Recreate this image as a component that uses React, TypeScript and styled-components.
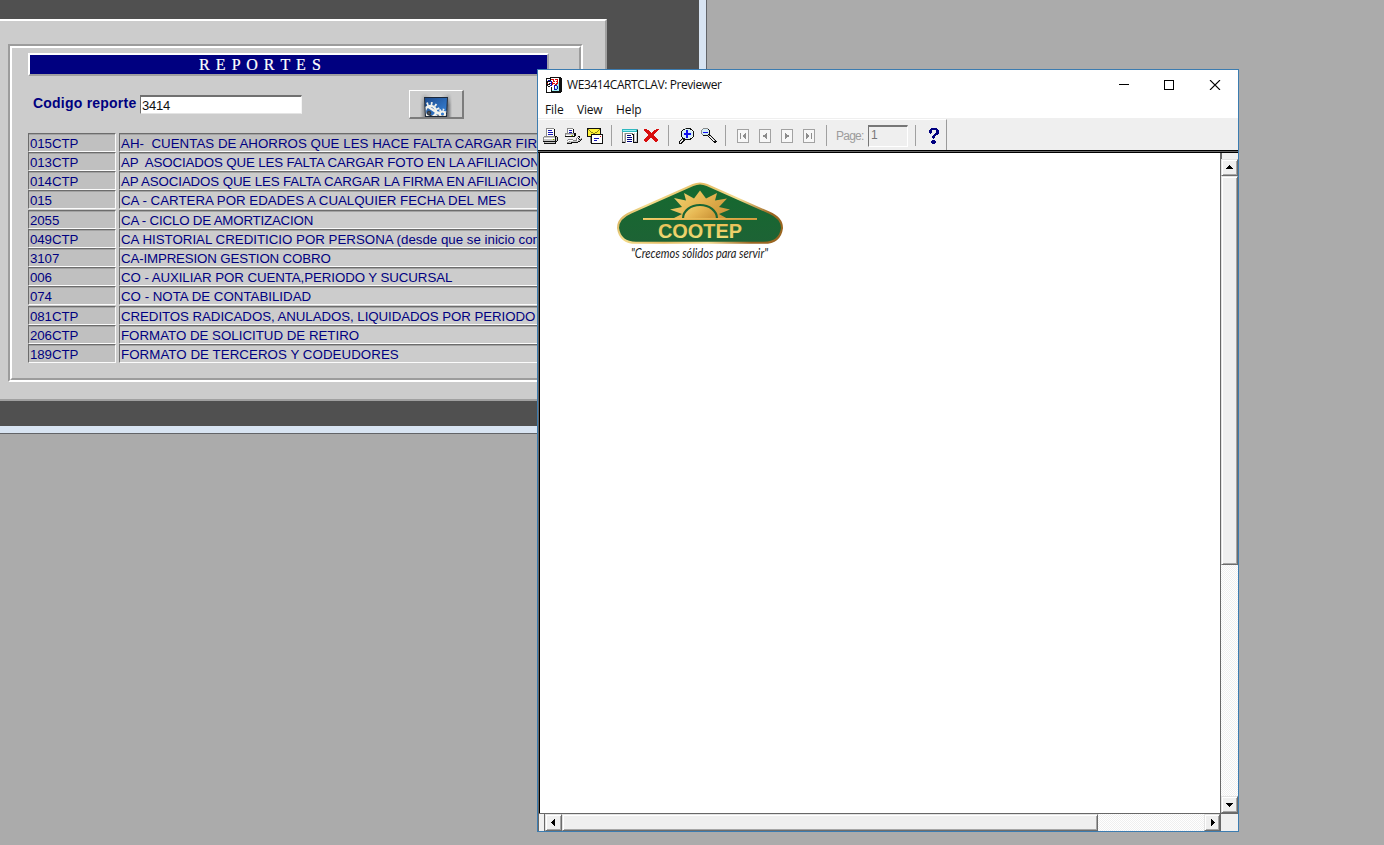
import React from "react";
import styled, { createGlobalStyle } from "styled-components";

const GlobalStyle = createGlobalStyle`
  * { box-sizing: border-box; }
  body { margin: 0; background: #ababab; overflow: hidden; }
`;

const Desktop = styled.main`
  position: relative;
  width: 1384px;
  height: 845px;
  overflow: hidden;
  background: #ababab;
  font-family: "Liberation Sans", sans-serif;
`;

/* ---------- form window ---------- */

const FormWindow = styled.section`
  position: absolute;
  left: 0;
  top: 0;
  width: 707px;
  height: 434px;
  background: #d8e4f2;
  border: solid #626468;
  border-width: 0 1px 1px 0;
`;

const FormCanvas = styled.div`
  width: 699px;
  height: 426px;
  padding-top: 19px;
  background: #505050;
`;

const FormPanel = styled.div`
  width: 607px;
  height: 382px;
  padding: 23px 0 0 8px;
  background: #cccccc;
  border-top: 2px solid #fff;
  border-right: 2px solid #a0a0a0;
  border-bottom: 2px solid #a0a0a0;
`;

const GroupOuter = styled.div`
  width: 575px;
  height: 338px;
  border: 2px solid;
  border-color: #9c9c9c #fff #fff #9c9c9c;
`;

const GroupInner = styled.div`
  height: 100%;
  padding: 5px 0 0 16px;
  border: 2px solid;
  border-color: #fff #9c9c9c #9c9c9c #fff;
`;

const Banner = styled.h1`
  margin: 0;
  width: 521px;
  height: 23px;
  padding-left: 169px;
  background: #000080;
  border: 2px solid;
  border-color: #fff #a0a0a8 #a0a0a0 #fff;
  color: #fff;
  font: 400 16px/20px "Liberation Serif", serif;
  letter-spacing: 1.07px;
  -webkit-text-stroke: 0.2px #fff;
  white-space: pre;
`;

const CodeLine = styled.div`
  display: flex;
  height: 57px;
  padding: 14px 0 0 5px;
`;

const CodeLabel = styled.label`
  width: 107px;
  padding-top: 5px;
  color: #000080;
  font: 700 14px/17px "Liberation Sans", sans-serif;
  letter-spacing: 0.22px;
  white-space: nowrap;
`;

const CodeInput = styled.div`
  width: 162px;
  height: 19px;
  margin-top: 5px;
  padding-left: 1px;
  background: #fff;
  border: solid;
  border-width: 2px 1px 1px 1px;
  border-color: #707070 #f4f4f4 #e4e4e4 #707070;
  color: #101010;
  font-size: 13px;
  line-height: 17px;
  letter-spacing: -0.2px;
`;

const RunButton = styled.button`
  display: flex;
  justify-content: center;
  align-items: flex-end;
  width: 55px;
  height: 29px;
  margin: 0 0 0 107px;
  padding: 0;
  background: #cccccc;
  border: solid;
  border-width: 1px 2px 2px 1px;
  border-color: #fff #7c7c7c #7c7c7c #fff;
`;

const Rows = styled.div`
  display: flex;
  flex-direction: column;
`;

const Row = styled.div<{ $gap: boolean }>`
  display: flex;
  gap: 3px;
  margin-top: ${(p) => (p.$gap ? 1 : 0)}px;
`;

const Cell = styled.div<{ $width: number; $shade: boolean; $spacing?: number }>`
  width: ${(p) => p.$width}px;
  height: 19px;
  padding-left: 1px;
  overflow: hidden;
  background: ${(p) => (p.$shade ? "#c0c0c0" : "#cccccc")};
  border: 1px solid;
  border-color: #6c6c6c #fbfbfb #fbfbfb #6c6c6c;
  box-shadow: inset 0 1px 0 #a2a2a2;
  color: #000080;
  font-size: 13.3px;
  line-height: 19px;
  letter-spacing: ${(p) => p.$spacing ?? -0.1}px;
  white-space: pre;
`;

/* ---------- previewer window ---------- */

const Previewer = styled.section`
  position: absolute;
  left: 537px;
  top: 69px;
  display: flex;
  flex-direction: column;
  width: 702px;
  height: 763px;
  background: #fff;
  border: 1px solid #3c7cb0;
`;

const TitleBar = styled.header`
  display: flex;
  height: 30px;
  padding-left: 8px;
  align-items: center;
  color: #111;
  font: 12px/16px "Open Sans", sans-serif;
`;

const TitleText = styled.span`
  flex: 1;
  padding-left: 5px;
  letter-spacing: -0.41px;
`;

const Caption = styled.div`
  display: flex;
  gap: 35px;
  padding-right: 17px;
`;

const MenuBar = styled.nav`
  display: flex;
  height: 18px;
  padding-left: 7px;
  align-items: center;
  color: #111;
  font: 12px/16px "Open Sans", sans-serif;
`;

const MenuItem = styled.span<{ $width: number; $spacing: number }>`
  width: ${(p) => p.$width}px;
  padding-top: 2px;
  letter-spacing: ${(p) => p.$spacing}px;
`;

const ToolBar = styled.div`
  display: flex;
  height: 32px;
  background: #efefef;
`;

const Band = styled.div`
  display: flex;
  width: 409px;
  height: 31px;
  margin-top: 1px;
  padding: 1px 0 0 5px;
  align-items: center;
  border-top: 1px solid #fff;
  border-right: 1px solid #9a9a9a;
`;

const Tool = styled.span<{ $slot: number }>`
  display: flex;
  width: ${(p) => p.$slot}px;
  flex: none;
`;

const Separator = styled.i<{ $slot: number }>`
  width: ${(p) => p.$slot}px;
  height: 21px;
  flex: none;
  border-left: 1px solid #a0a0a0;
`;

const PageLabel = styled.span`
  width: 32px;
  color: #9c9c9c;
  font-size: 12px;
  letter-spacing: -0.75px;
`;

const PageInput = styled.span`
  width: 40px;
  height: 22px;
  margin-right: 7px;
  padding-left: 2px;
  border: solid;
  border-width: 2px 1px 1px 1px;
  border-color: #777 #fff #fff #777;
  color: #777;
  font-size: 12px;
  line-height: 16px;
`;

const Divider = styled.div`
  height: 3px;
  background: #686868;
  border: solid #000;
  border-width: 1px 0;
`;

const View = styled.div`
  display: grid;
  grid-template-columns: 682px 18px;
  grid-template-rows: 660px 18px;
`;

const Paper = styled.div`
  padding: 28px 0 0 78px;
  background: #fff;
  border-left: 1px solid #686868;
  box-shadow: inset 1px 0 0 #000;
`;

const track = `repeating-conic-gradient(#ffffff 0 25%, #efefef 0 50%) 0 0 / 2px 2px`;

const VScroll = styled.div`
  display: flex;
  flex-direction: column;
  background: ${track};
  border-left: 1px solid #686868;
`;

const HScroll = styled.div`
  display: flex;
  background: ${track};
  border-top: 1px solid #686868;
`;

const SplitBox = styled.div<{ $w: number; $h: number }>`
  width: ${(p) => p.$w}px;
  height: ${(p) => p.$h}px;
  flex: none;
  background: #f0f0f0;
  border-left: 1px solid #686868;
`;

const SideBox = styled(SplitBox)`
  border-right: 1px solid #686868;
`;

const ScrollPiece = styled.div<{ $w: number; $h: number }>`
  display: flex;
  align-items: center;
  justify-content: center;
  width: ${(p) => p.$w}px;
  height: ${(p) => p.$h}px;
  flex: none;
  background: #efefef;
  border: 1px solid;
  border-color: #e3e3e3 #6c6c6c #6c6c6c #e3e3e3;
  box-shadow: inset 1px 1px 0 #fff, inset -1px -1px 0 #a6a6a6;
`;

const Spacer = styled.div`
  flex: 1;
`;

const Corner = styled.div`
  background: #f0f0f0;
  border: solid #686868;
  border-width: 1px 0 0 1px;
`;

/* ---------- drawings ---------- */

const palette: Record<string, string> = {
  K: "#101010",
  W: "#ffffff",
  G: "#8a8a8a",
  L: "#c8c8c8",
  B: "#1414b4",
  b: "#1010f0",
  Y: "#fff23a",
  y: "#8c8618",
  g: "#4c9a30",
  R: "#d80c0c",
  T: "#30b8c0",
  C: "#9cf0f4",
  c: "#d4ecf6",
  N: "#000080",
};

function Pixels({ rows }: { rows: string[] }) {
  const w = Math.max(...rows.map((r) => r.length));
  return (
    <svg width={w} height={rows.length} viewBox={`0 0 ${w} ${rows.length}`} shapeRendering="crispEdges">
      {rows.flatMap((r, y) =>
        [...r].map((c, x) =>
          palette[c] ? <rect key={`${x}-${y}`} x={x} y={y} width="1" height="1" fill={palette[c]} /> : null,
        ),
      )}
    </svg>
  );
}

const appIcon = [
  "....KKKKKKKKKKK.",
  "KKKKKWWWWWWWWKKK",
  "KWWWKRRRWRRRWKKK",
  "KWBBKWWRWWWRWKKK",
  "KKKKBBWRRWRRWKKK",
  "KKWWWBRWWWWRCKKK",
  "KRWKBBRRRWRRCKKK",
  "KKKKWBRWWRRCCKKK",
  "KKWWBBWWBBBCCKKK",
  "KWKKWWWWBWCBCKKK",
  "KWWWWKWWBWCBCKKK",
  "KWWWWKWWBCCBCKKK",
  "KWWWWKWWBBBCCKKK",
  "KWWWWKCCCCCCCKKK",
  "KWWWWKKKKKKKKKKK",
  "KKKKKKKKKKKKKKK.",
];

const printerIcon = [
  "...GGGGGGGG.....",
  "...GWWWWWWWK....",
  "...GWBBBBWWK....",
  "...GWWWWWWWK....",
  "...GWBBBBBWK....",
  "...GWWWWWWWK....",
  "...GWBBBBBWK....",
  "...GWWWWWWWK....",
  ".GGGGGGGGGGGKK..",
  "GLLLLLLLLLLLKLK.",
  "GWWWWWWWWWWWKLK.",
  "GLLLLLLLLYgLKLK.",
  "GLLLLLLLLLLLKLK.",
  "KKKKKKKKKKKKKK..",
  ".GLLLLLLLLLLK...",
  ".KKKKKKKKKKKK...",
];

const setupIcon = [
  "..GGGGGG.........",
  "..GWWWWWK........",
  "..GWBBBWK........",
  "..GWWWWWK........",
  "..GWBBBWK........",
  "GGGGGGGGGKK......",
  "GLLLLLLLLKK......",
  "GWWWWWYgWKK......",
  "KKKKKKKKKK...KK..",
  "............GWK..",
  "...........GWK..G",
  "...GGGGG...GWLKGK",
  "..GWWWWWGGGGWLLK.",
  "....GLLLLLLLLKK..",
  "..GGLLKKKKKKK....",
  "..KKKKK..........",
];

const mailIcon = [
  "KKKKKKKKKKKKKK..",
  "KyYYYYYYYYYYyK..",
  "KYyYYYYYYYYyYK..",
  "KYYyYYYYYYyYYK..",
  "KYYYyyYYyyYYYK..",
  "KYYYYYyyYYYYYK..",
  "KYYYKKKKKKKKKKKK",
  "KYYYKWWWWWWWWWWK",
  "KKKKKWWWWWWWWRWK",
  "...GKWWWWWWWWWWK",
  "...GKWWBBBBBWWWK",
  "...GKWWWWWWWWWWK",
  "...GKWWBBBWWWWWK",
  "...GKWWWWWWWWWWK",
  "...GKWWWWWWWWWWK",
  "....KKKKKKKKKKKK",
];

const reportIcon = [
  "TTTTTTTTTTTTTTTG",
  "TCCCCCCCCCCCCCTK",
  "TTTTTTTTTTTTTTTK",
  "GWWWWWWWWWWWWWWK",
  "GWLGGGGGGGGWLWLK",
  "GWLGWWWWWWKKLWLK",
  "GWLGWNNNNWWKLWLK",
  "GWLGWWWWWWWKLWLK",
  "GWLGWNNNNNWKLWLK",
  "GWLGWWWWWWWKLWLK",
  "GWLGWNNNNNWKLWLK",
  "GWLGWWWWWWWKLWLK",
  "GLLGWNNNNNWKLLLK",
  "KKKGWWWWWWWKKKKK",
];

const closeIcon = [
  "RRR.........RRR",
  "RRRRR.....RRRR.",
  ".RRRRR...RRRR..",
  "..RRRRR.RRRR...",
  "...RRRRRRRR....",
  "....RRRRRR.....",
  "....RRRRRR.....",
  "...RRRRRRRR....",
  "..RRRRRRRRRR...",
  ".RRRRR..RRRRR..",
  "RRRRR....RRRRR.",
  "RRRR......RRRR.",
  ".RR........RR..",
];

const zoomInIcon = [
  "......GKKKKK....",
  "....KKcccccKK...",
  "...KcccbbcccWK..",
  "..KccccbbccccWK.",
  "..KccccbbcccccK.",
  "..KccbbbbbbbccK.",
  "..KccbbbbbbbccK.",
  "..KccccbbcccccK.",
  "..KccccbbccccWK.",
  "...KcccbbcccWK..",
  "...KKKcccccKK...",
  "..KLKKKKKKKK....",
  ".KLWKK..........",
  "KLWKK...........",
  "KWKK............",
  "KKK.............",
];

const zoomOutIcon = [
  "..GGGGG.........",
  ".GcccccK........",
  "GcccccccK.......",
  "GcccccccK.......",
  "GcbbbbbcK.......",
  "GcccccccK.......",
  ".GcccccKK.......",
  "..KKKKKLKK......",
  ".......KWLK.....",
  "........KWLK....",
  ".........KWLK...",
  "..........KWLK..",
  "...........KWLK.",
  "............KKKK",
  ".............KK.",
];

const helpIcon = [
  "..NNNNNN..",
  ".NNNNNNNN.",
  "NNN....NNN",
  "NNN....NNN",
  "NNN....NNN",
  ".N....NNNN",
  ".....NNNN.",
  "....NNN...",
  "...NNN....",
  "...NNN....",
  "....N.....",
  "..........",
  "...NNN....",
  "..NNNNN...",
  "..NNNNN...",
  "...NNN....",
];

function NavIcon({ back, end }: { back?: boolean; end?: boolean }) {
  return (
    <svg width="12" height="14" viewBox="0 0 12 14" shapeRendering="crispEdges">
      <g transform={back ? "translate(12 0) scale(-1 1)" : undefined}>
        <rect x=".5" y=".5" width="11" height="13" fill="#f7f7f7" stroke="#a2a2a2" />
        <path d={end ? "M3 4h1v1h1v1h1v2h-1v1h-1v1h-1z" : "M4 4h1v1h1v1h2v2h-2v1h-1v1h-1z"} fill="#8c8c8c" />
        {end && <path d="M8 4h1v6h-1z" fill="#8c8c8c" />}
      </g>
    </svg>
  );
}

function GearPicture() {
  return (
    <svg width="32" height="24" viewBox="0 0 32 24">
      <defs>
        <linearGradient id="metal">
          <stop offset="0" stopColor="#ccc" />
          <stop offset=".16" stopColor="#808286" />
          <stop offset=".4" stopColor="#e4e6e8" />
          <stop offset=".65" stopColor="#e4e6e8" />
          <stop offset=".87" stopColor="#707276" />
          <stop offset="1" stopColor="#ccc" />
        </linearGradient>
        <linearGradient id="fade" x2="0" y2="1">
          <stop offset="0" stopColor="#ccc" />
          <stop offset=".5" stopColor="#ccc" stopOpacity="0" />
        </linearGradient>
        <linearGradient id="screen" x2="1" y2="1">
          <stop offset="0" stopColor="#1c4a8c" />
          <stop offset="1" stopColor="#3a86dc" />
        </linearGradient>
        <clipPath id="screenClip">
          <path d="M5 5h22l-1 18h-20z" />
        </clipPath>
      </defs>
      <path d="M0 0h32v24h-32z" fill="url(#metal)" />
      <path d="M0 0h32v24h-32z" fill="url(#fade)" />
      <path d="M4 4h24l-1 20h-22z" fill="#1c2738" />
      <path d="M5 5h22l-1 17h-20z" fill="url(#screen)" />
      <g clipPath="url(#screenClip)" fill="none" stroke="#f2f2ec">
        <circle cx="10.500" cy="18.500" r="5.600" strokeWidth="2.400" />
        <circle cx="10.500" cy="18.500" r="8" strokeWidth="3" strokeDasharray="1.700 2.500" />
        <path d="M7 13l12 8" strokeWidth="2.200" />
        <circle cx="9" cy="20" r="1.800" fill="#4a4e54" stroke="#30343a" />
        <circle cx="22.500" cy="21" r="2.600" strokeWidth="2" />
        <circle cx="22.500" cy="21" r="4.400" strokeWidth="2" strokeDasharray="1.600 1.800" />
      </g>
    </svg>
  );
}

const Logo = styled.svg`
  display: block;
  overflow: visible;
`;

function CootepLogo() {
  return (
    <Logo width="170" height="90" viewBox="0 0 170 90">
      <defs>
        <linearGradient id="rim" x2="1" y2=".25">
          <stop offset="0" stopColor="#b98228" />
          <stop offset=".25" stopColor="#f3dc8c" />
          <stop offset=".5" stopColor="#e2bb62" />
          <stop offset=".75" stopColor="#f5dd92" />
          <stop offset="1" stopColor="#9a6520" />
        </linearGradient>
        <linearGradient id="gold" x2="1" y2=".5">
          <stop offset="0" stopColor="#f1d774" />
          <stop offset=".55" stopColor="#e6b652" />
          <stop offset="1" stopColor="#d09a3c" />
        </linearGradient>
        <linearGradient id="lettering" x2="0" y2="1">
          <stop offset="0" stopColor="#e9b94f" />
          <stop offset="1" stopColor="#f0e07c" />
        </linearGradient>
        <linearGradient id="leaf" x2="0" y2="1">
          <stop offset="0" stopColor="#15692f" />
          <stop offset="1" stopColor="#1d6335" />
        </linearGradient>
      </defs>
      <path
        d="M76 4Q83 .8 90 4L152 31.500Q165 37 165 47Q163 61.800 147 61.800H19Q3 61.800 1 47Q1 37 14 31.500Z"
        fill="url(#leaf)"
        stroke="url(#rim)"
        strokeWidth="2"
      />
      <g transform="translate(-1 1.500)">
        <polygon
          points="56,36.500 66,31.500 54,27 66,24.500 58,15.500 70,18 68,10.500 78,16 84,8 90,16 101,10.500 99,18 111,16 103,24.500 114,27 103,31.500 112,36.500"
          fill="url(#gold)"
        />
        <path d="M67 36A17 13.500 0 0 1 101 36" fill="url(#gold)" stroke="#1a6634" strokeWidth="2.200" />
        <path d="M27 35.500H141V37.500H27Z" fill="url(#gold)" />
      </g>
      <text
        x="41"
        y="56.500"
        fill="url(#lettering)"
        fontFamily="Liberation Sans, sans-serif"
        fontWeight="700"
        fontSize="20"
        textLength="84"
        lengthAdjust="spacingAndGlyphs"
      >
        COOTEP
      </text>
      <text
        x="14"
        y="76.500"
        fill="#222"
        fontFamily="Lato, sans-serif"
        fontStyle="italic"
        fontSize="14"
        textLength="137"
        lengthAdjust="spacingAndGlyphs"
      >
        "Crecemos sólidos para servir"
      </text>
    </Logo>
  );
}

type Dir = "up" | "down" | "left" | "right";
const arrows: Record<Dir, string> = {
  up: "M3 1h1v1h1v1h1v1h1v1h-7v-1h1v-1h1v-1h1z",
  down: "M0 2h7v1h-1v1h-1v1h-1v1h-1v-1h-1v-1h-1v-1h-1z",
  left: "M1 3h1v-1h1v-1h1v-1h1v7h-1v-1h-1v-1h-1v-1h-1z",
  right: "M2 0h1v1h1v1h1v1h1v1h-1v1h-1v1h-1v1h-1z",
};

const Arrow = ({ dir }: { dir: Dir }) => (
  <svg width="7" height="7" viewBox="0 0 7 7" shapeRendering="crispEdges">
    <path d={arrows[dir]} fill="#000" />
  </svg>
);

/* ---------- data ---------- */

const reports: { code: string; name: string; spacing: number }[] = [
  { code: "015CTP", name: "AH-  CUENTAS DE AHORROS QUE LES HACE FALTA CARGAR FIR", spacing: 0.03 },
  { code: "013CTP", name: "AP  ASOCIADOS QUE LES FALTA CARGAR FOTO EN LA AFILIACION", spacing: -0.12 },
  { code: "014CTP", name: "AP ASOCIADOS QUE LES FALTA CARGAR LA FIRMA EN AFILIACION", spacing: -0.12 },
  { code: "015", name: "CA - CARTERA POR EDADES A CUALQUIER FECHA DEL MES", spacing: 0 },
  { code: "2055", name: "CA - CICLO DE AMORTIZACION", spacing: -0.19 },
  { code: "049CTP", name: "CA HISTORIAL CREDITICIO POR PERSONA (desde que se inicio con", spacing: 0 },
  { code: "3107", name: "CA-IMPRESION GESTION COBRO", spacing: -0.15 },
  { code: "006", name: "CO - AUXILIAR POR CUENTA,PERIODO Y SUCURSAL", spacing: -0.08 },
  { code: "074", name: "CO - NOTA DE CONTABILIDAD", spacing: 0 },
  { code: "081CTP", name: "CREDITOS RADICADOS, ANULADOS, LIQUIDADOS POR PERIODO", spacing: -0.07 },
  { code: "206CTP", name: "FORMATO DE SOLICITUD DE RETIRO", spacing: 0 },
  { code: "189CTP", name: "FORMATO DE TERCEROS Y CODEUDORES", spacing: 0.06 },
];

export default function App() {
  return (
    <Desktop>
      <GlobalStyle />
      <FormWindow>
        <FormCanvas>
          <FormPanel>
            <GroupOuter>
              <GroupInner>
                <Banner>R E P O R T E S</Banner>
                <CodeLine>
                  <CodeLabel>Codigo reporte</CodeLabel>
                  <CodeInput>3414</CodeInput>
                  <RunButton aria-label="Ejecutar">
                    <GearPicture />
                  </RunButton>
                </CodeLine>
                <Rows>
                  {reports.map((r, i) => (
                    <Row key={r.code} $gap={i === 4 || i === 9}>
                      <Cell $width={88} $shade>
                        {r.code}
                      </Cell>
                      <Cell $width={429} $shade={i === 0} $spacing={r.spacing}>
                        {r.name}
                      </Cell>
                    </Row>
                  ))}
                </Rows>
              </GroupInner>
            </GroupOuter>
          </FormPanel>
        </FormCanvas>
      </FormWindow>

      <Previewer>
        <TitleBar>
          <Pixels rows={appIcon} />
          <TitleText>WE3414CARTCLAV: Previewer</TitleText>
          <Caption>
            <svg width="10" height="10" viewBox="0 0 10 10" shapeRendering="crispEdges">
              <path d="M0 4h10v1H0z" />
            </svg>
            <svg width="10" height="10" viewBox="0 0 10 10" shapeRendering="crispEdges">
              <path d="M.5.5h9v9h-9z" fill="none" stroke="#000" />
            </svg>
            <svg width="12" height="10" viewBox="-.5 0 12 10">
              <path d="M.5 0l10 10M10.500 0l-10 10" fill="none" stroke="#000" strokeWidth="1.100" />
            </svg>
          </Caption>
        </TitleBar>
        <MenuBar>
          <MenuItem $width={32} $spacing={-0.1}>File</MenuItem>
          <MenuItem $width={39} $spacing={-0.2}>View</MenuItem>
          <MenuItem $width={40} $spacing={-0.1}>Help</MenuItem>
        </MenuBar>
        <ToolBar>
          <Band>
            <Tool $slot={22}><Pixels rows={printerIcon} /></Tool>
            <Tool $slot={22}><Pixels rows={setupIcon} /></Tool>
            <Tool $slot={24}><Pixels rows={mailIcon} /></Tool>
            <Separator $slot={11} />
            <Tool $slot={22}><Pixels rows={reportIcon} /></Tool>
            <Tool $slot={24}><Pixels rows={closeIcon} /></Tool>
            <Separator $slot={11} />
            <Tool $slot={22}><Pixels rows={zoomInIcon} /></Tool>
            <Tool $slot={24}><Pixels rows={zoomOutIcon} /></Tool>
            <Separator $slot={12} />
            <Tool $slot={22}><NavIcon back end /></Tool>
            <Tool $slot={22}><NavIcon back /></Tool>
            <Tool $slot={22}><NavIcon /></Tool>
            <Tool $slot={23}><NavIcon end /></Tool>
            <Separator $slot={10} />
            <PageLabel>Page:</PageLabel>
            <PageInput>1</PageInput>
            <Separator $slot={14} />
            <Pixels rows={helpIcon} />
          </Band>
        </ToolBar>
        <Divider />
        <View>
          <Paper>
            <CootepLogo />
          </Paper>
          <VScroll>
            <SplitBox $w={17} $h={6} />
            <ScrollPiece $w={17} $h={17}><Arrow dir="up" /></ScrollPiece>
            <ScrollPiece $w={17} $h={389} />
            <Spacer />
            <ScrollPiece $w={17} $h={17}><Arrow dir="down" /></ScrollPiece>
          </VScroll>
          <HScroll>
            <SideBox $w={7} $h={17} />
            <ScrollPiece $w={17} $h={17}><Arrow dir="left" /></ScrollPiece>
            <ScrollPiece $w={536} $h={17} />
            <Spacer />
            <ScrollPiece $w={16} $h={17}><Arrow dir="right" /></ScrollPiece>
          </HScroll>
          <Corner />
        </View>
      </Previewer>
    </Desktop>
  );
}
